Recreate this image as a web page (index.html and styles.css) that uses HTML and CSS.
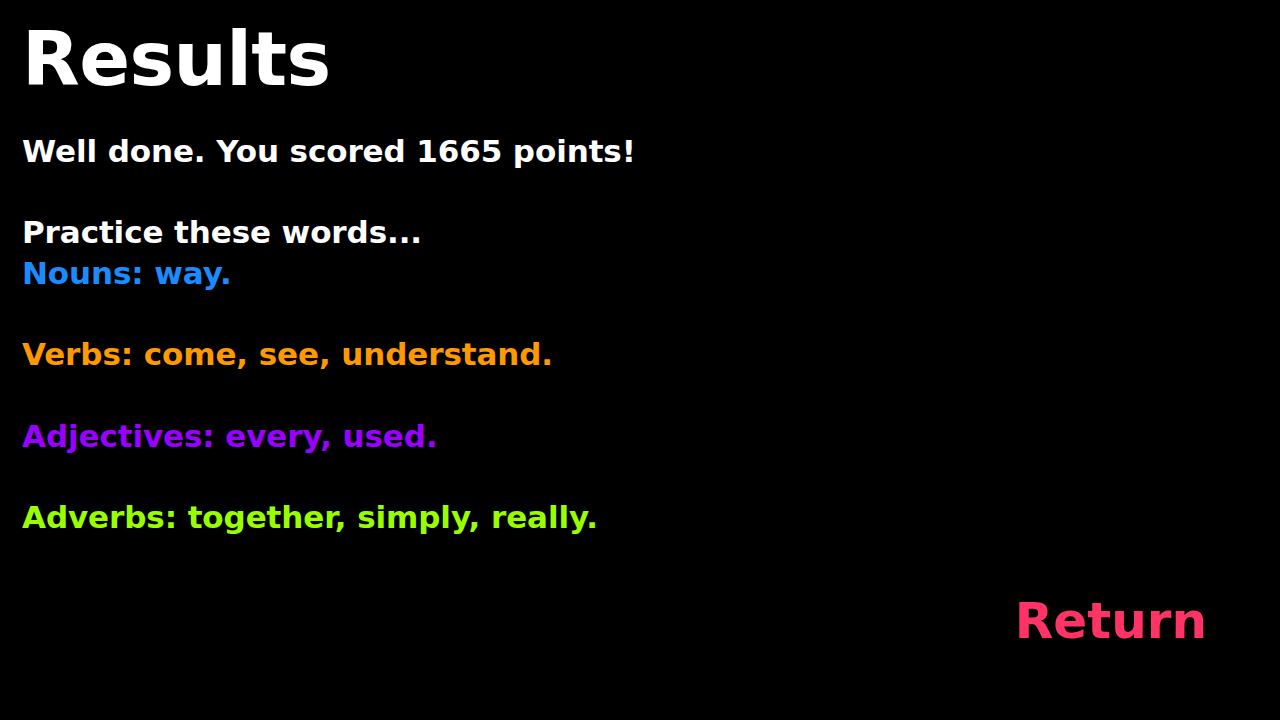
FILE: index.html
```html
<!DOCTYPE html>
<html>
<head>
<meta charset="utf-8">
<link rel="stylesheet" href="styles.css">
</head>
<body>
<main class="screen">
  <h1 class="title">Results</h1>
  <div class="report">
    <p class="line white">Well done. You scored 1665 points!</p>
    <p class="line blank"></p>
    <p class="line white">Practice these words...</p>
    <p class="line nouns">Nouns: way.</p>
    <p class="line blank"></p>
    <p class="line verbs">Verbs: come, see, understand.</p>
    <p class="line blank"></p>
    <p class="line adjectives">Adjectives: every, used.</p>
    <p class="line blank"></p>
    <p class="line adverbs">Adverbs: together, simply, really.</p>
  </div>
  <div class="actions">
    <button class="return">Return</button>
  </div>
</main>
</body>
</html>
```
FILE: styles.css
```css
* { box-sizing: border-box; }
html, body {
  margin: 0;
  padding: 0;
  width: 1280px;
  height: 720px;
  background: #000;
  overflow: hidden;
}
.screen {
  display: flex;
  flex-direction: column;
  height: 720px;
  padding: 14px 22px 0 22px;
  font-family: "DejaVu Sans", "Liberation Sans", sans-serif;
  font-weight: 700;
}
.title {
  margin: 0;
  font-size: 75px;
  line-height: 90px;
  color: #fff;
  font-weight: 700;
  letter-spacing: -0.6px;
}
.report {
  margin-top: 27px;
}
.line {
  margin: 0;
  font-size: 31px;
  line-height: 40.7px;
  height: 40.7px;
  white-space: pre;
  letter-spacing: -0.1px;
}
.white { color: #fff; }
.nouns { color: #1a8cff; }
.verbs { color: #ff9900; }
.adjectives { color: #9900ff; }
.adverbs { color: #99ff00; }
.actions {
  display: flex;
  justify-content: flex-end;
  padding-right: 51px;
  margin-top: 53px;
}
.return {
  background: none;
  border: none;
  padding: 0;
  font-family: inherit;
  font-weight: 700;
  font-size: 50px;
  line-height: 60px;
  color: #ff3366;
  cursor: pointer;
}
```
